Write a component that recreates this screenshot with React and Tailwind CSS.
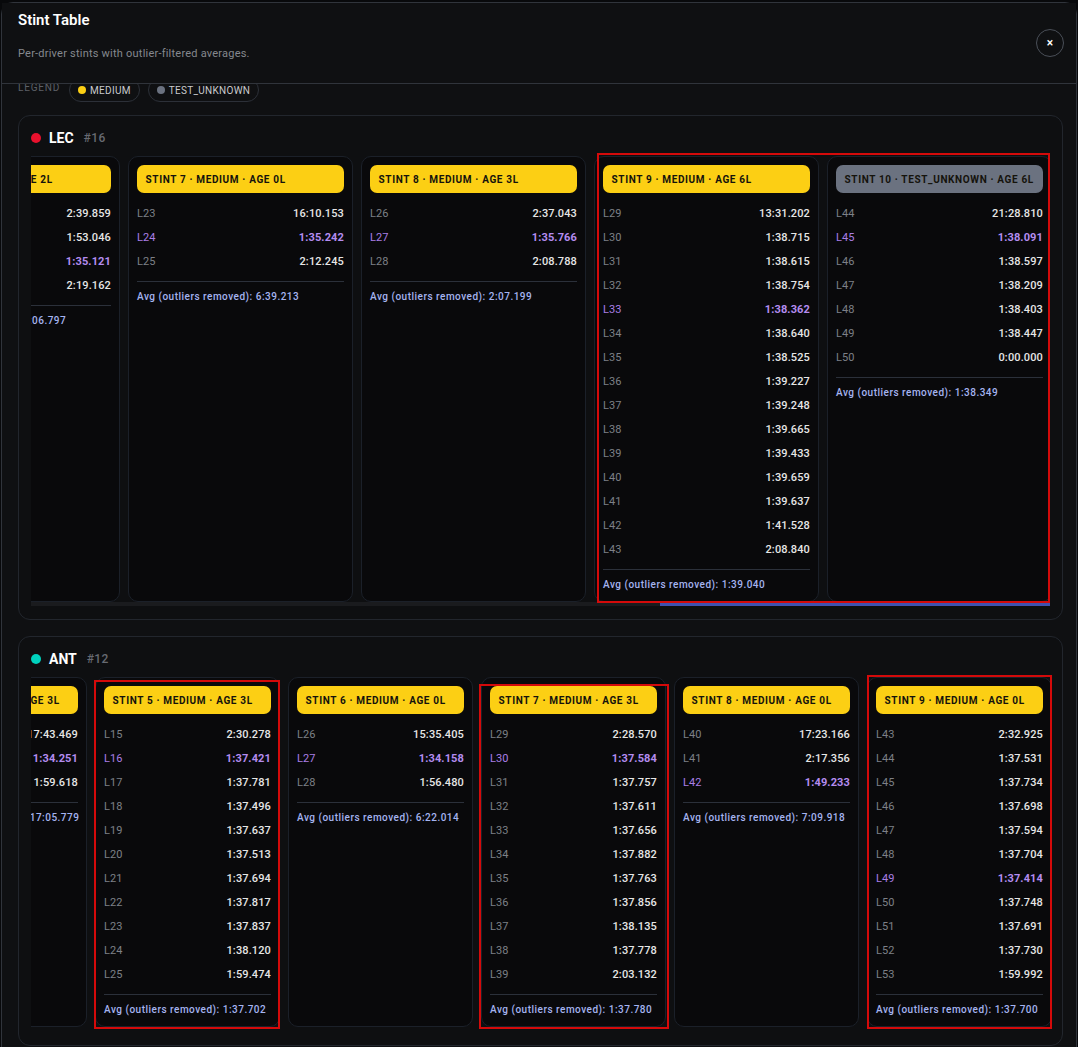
const lecStints = [
  {
    title: 'STINT 6 · MEDIUM · AGE 2L',
    laps: [['L19', '2:39.859'], ['L20', '1:53.046'], ['L21', '1:35.121', true], ['L22', '2:19.162']],
    avg: '2:06.797',
  },
  {
    title: 'STINT 7 · MEDIUM · AGE 0L',
    laps: [['L23', '16:10.153'], ['L24', '1:35.242', true], ['L25', '2:12.245']],
    avg: '6:39.213',
  },
  {
    title: 'STINT 8 · MEDIUM · AGE 3L',
    laps: [['L26', '2:37.043'], ['L27', '1:35.766', true], ['L28', '2:08.788']],
    avg: '2:07.199',
  },
  {
    title: 'STINT 9 · MEDIUM · AGE 6L',
    laps: [
      ['L29', '13:31.202'], ['L30', '1:38.715'], ['L31', '1:38.615'], ['L32', '1:38.754'], ['L33', '1:38.362', true],
      ['L34', '1:38.640'], ['L35', '1:38.525'], ['L36', '1:39.227'], ['L37', '1:39.248'], ['L38', '1:39.665'],
      ['L39', '1:39.433'], ['L40', '1:39.659'], ['L41', '1:39.637'], ['L42', '1:41.528'], ['L43', '2:08.840'],
    ],
    avg: '1:39.040',
  },
  {
    title: 'STINT 10 · TEST_UNKNOWN · AGE 6L',
    gray: true,
    laps: [
      ['L44', '21:28.810'], ['L45', '1:38.091', true], ['L46', '1:38.597'], ['L47', '1:38.209'],
      ['L48', '1:38.403'], ['L49', '1:38.447'], ['L50', '0:00.000'],
    ],
    avg: '1:38.349',
  },
];

const antStints = [
  {
    title: 'STINT 4 · MEDIUM · AGE 3L',
    laps: [['L12', '17:43.469'], ['L13', '1:34.251', true], ['L14', '1:59.618']],
    avg: '17:05.779',
  },
  {
    title: 'STINT 5 · MEDIUM · AGE 3L',
    laps: [
      ['L15', '2:30.278'], ['L16', '1:37.421', true], ['L17', '1:37.781'], ['L18', '1:37.496'], ['L19', '1:37.637'],
      ['L20', '1:37.513'], ['L21', '1:37.694'], ['L22', '1:37.817'], ['L23', '1:37.837'], ['L24', '1:38.120'], ['L25', '1:59.474'],
    ],
    avg: '1:37.702',
  },
  {
    title: 'STINT 6 · MEDIUM · AGE 0L',
    laps: [['L26', '15:35.405'], ['L27', '1:34.158', true], ['L28', '1:56.480']],
    avg: '6:22.014',
  },
  {
    title: 'STINT 7 · MEDIUM · AGE 3L',
    laps: [
      ['L29', '2:28.570'], ['L30', '1:37.584', true], ['L31', '1:37.757'], ['L32', '1:37.611'], ['L33', '1:37.656'],
      ['L34', '1:37.882'], ['L35', '1:37.763'], ['L36', '1:37.856'], ['L37', '1:38.135'], ['L38', '1:37.778'], ['L39', '2:03.132'],
    ],
    avg: '1:37.780',
  },
  {
    title: 'STINT 8 · MEDIUM · AGE 0L',
    laps: [['L40', '17:23.166'], ['L41', '2:17.356'], ['L42', '1:49.233', true]],
    avg: '7:09.918',
  },
  {
    title: 'STINT 9 · MEDIUM · AGE 0L',
    laps: [
      ['L43', '2:32.925'], ['L44', '1:37.531'], ['L45', '1:37.734'], ['L46', '1:37.698'], ['L47', '1:37.594'],
      ['L48', '1:37.704'], ['L49', '1:37.414', true], ['L50', '1:37.748'], ['L51', '1:37.691'], ['L52', '1:37.730'], ['L53', '1:59.992'],
    ],
    avg: '1:37.700',
  },
];

function StintCard({ stint, wide }) {
  return (
    <div className={`${wide ? 'w-[225px]' : 'w-[185px]'} shrink-0 rounded-[10px] border border-[#1b2029] bg-[#09090b] px-2 pt-2 pb-[9px]`}>
      <div className={`flex h-7 items-center rounded-[7px] px-[8.5px] text-[10px] font-bold tracking-[0.064em] whitespace-nowrap text-[#15130c] ${stint.gray ? 'bg-[#6b7280]' : 'bg-[#fccf14]'}`}>
        {stint.title}
      </div>
      <div className="mt-[9px]">
        {stint.laps.map(([lap, time, best]) => (
          <div key={lap} className="flex h-6 items-center justify-between text-[11px] tracking-[0.012em]">
            <span className={best ? 'text-[#a97fe6]' : 'text-[#7d8087]'}>{lap}</span>
            <span className={best ? 'font-bold text-[#b48cf0]' : 'font-medium text-[#e6e6e6]'}>{time}</span>
          </div>
        ))}
      </div>
      <div className="mt-[7px] border-t border-[#2b303a] pt-2 text-[10px] leading-[14px] font-medium tracking-[0.05em] whitespace-nowrap text-[#a5b4f0]">
        Avg (outliers removed): {stint.avg}
      </div>
    </div>
  );
}

function DriverCard({ code, number, dot, stints, wide, scrollbar }) {
  return (
    <div className="rounded-xl border border-[#22262d] bg-[#0e0f11] px-3 pt-3 pb-[13px]">
      <div className="mb-2 flex h-5 items-center">
        <span className={`h-2.5 w-2.5 rounded-full ${dot}`} />
        <span className="ml-2 text-[14px] font-bold text-white">{code}</span>
        <span className="ml-[10px] text-[12px] font-medium tracking-[0.03em] text-[#676a72]">{number}</span>
      </div>
      <div className="overflow-hidden">
        <div className="-mr-[2px] flex justify-end gap-2">
          {stints.map((s) => (
            <StintCard key={s.title} stint={s} wide={wide} />
          ))}
        </div>
      </div>
      {scrollbar ? (
        <div className="flex h-1 justify-end bg-[#1a1b1e]">
          <div className="h-1 w-[390px] bg-[#3f51b0]" />
        </div>
      ) : (
        <div className="h-[5px]" />
      )}
    </div>
  );
}

export default function App() {
  return (
    <div className="relative h-[1047px] overflow-hidden bg-[#08090b] pt-[2px] pl-px font-['Roboto',sans-serif]">
      <div className="flex h-[1100px] w-[1076px] flex-col rounded-t-xl border border-[#30343b] bg-[#0f1012]">
        <div className="relative z-10 flex h-[81px] shrink-0 items-start justify-between border-b border-[#30343b] bg-[#0f1012] px-[16px]">
          <div>
            <h1 className="mt-[7px] text-[15px] leading-5 font-semibold text-white">Stint Table</h1>
            <p className="mt-[16px] text-[11px] leading-4 tracking-[0.02em] text-[#85888e]">Per-driver stints with outlier-filtered averages.</p>
          </div>
          <button className="mt-[26px] mr-[-4px] flex h-7 w-7 items-center justify-center rounded-full border border-[#4a4f58] text-[12px] leading-none font-medium text-white">
            ×
          </button>
        </div>

        <div className="pr-[13px] pl-[16px]">
          <div className="-mt-[6px] mb-[13px] flex h-6 items-center text-[10px] tracking-[0.03em]">
            <span className="-mt-[6px] w-[51px] tracking-[0.08em] text-[#5d6067]">LEGEND</span>
            <span className="flex h-6 items-center gap-[4px] rounded-full border border-[#2c3038] px-2 text-[#c9cacd]">
              <span className="h-2 w-2 rounded-full bg-[#fccf14]" />
              MEDIUM
            </span>
            <span className="ml-2 flex h-6 items-center gap-[4px] rounded-full border border-[#2c3038] px-2 text-[#c9cacd]">
              <span className="h-2 w-2 rounded-full bg-[#6b7280]" />
              TEST_UNKNOWN
            </span>
          </div>

          <div className="flex flex-col gap-4">
            <DriverCard code="LEC" number="#16" dot="bg-[#e8112d]" stints={lecStints} wide scrollbar />
            <DriverCard code="ANT" number="#12" dot="bg-[#00d2be]" stints={antStints} />
          </div>
        </div>
      </div>

      {/* red review marks drawn over the shot */}
      <div className="absolute top-[153px] left-[597px] h-[450px] w-[453px] border-2 border-[#d40a0a]" />
      <div className="absolute top-[680px] left-[94px] h-[349px] w-[186px] border-2 border-[#d40a0a]" />
      <div className="absolute top-[684px] left-[479px] h-[345px] w-[190px] border-2 border-[#d40a0a]" />
      <div className="absolute top-[675px] left-[867px] h-[354px] w-[185px] border-2 border-[#d40a0a]" />
    </div>
  );
}
